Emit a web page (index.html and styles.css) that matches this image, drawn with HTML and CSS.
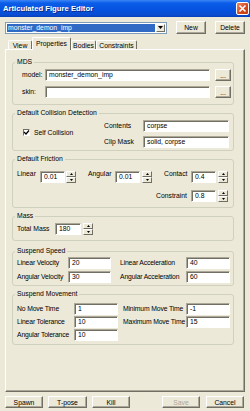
FILE: index.html
```html
<!DOCTYPE html>
<html>
<head>
<meta charset="utf-8">
<title>Articulated Figure Editor</title>
<link rel="stylesheet" href="styles.css">
</head>
<body>
<div class="window">
  <div class="titlebar">
    <span class="title">Articulated Figure Editor</span>
    <span class="close"><svg width="9" height="9" viewBox="0 0 9 9"><path d="M1.5 1.5L7.5 7.5M7.5 1.5L1.5 7.5" stroke="#fff" stroke-width="1.6" fill="none"/></svg></span>
  </div>

  <div class="toolbar">
    <div class="combo">
      <span class="combo-value">monster_demon_imp</span>
      <span class="combo-btn"><svg width="5" height="3" viewBox="0 0 5 3"><path d="M0 0H5L2.5 3Z" fill="#000"/></svg></span>
    </div>
    <span class="btn btn-top">New</span>
    <span class="btn btn-top">Delete</span>
  </div>

  <div class="tabs">
    <span class="tab tab-view">View</span>
    <span class="tab tab-active">Properties</span>
    <span class="tab tab-bodies">Bodies</span>
    <span class="tab tab-constraints">Constraints</span>
  </div>

  <div class="panel">
    <div class="group group-mds">
      <div class="group-title">MDS</div>
      <div class="mds-body">
        <div class="mds-row"><span class="lbl lbl-mds">model:</span><span class="field field-mds">monster_demon_imp</span><span class="btn btn-dots">...</span></div>
        <div class="mds-row"><span class="lbl lbl-mds">skin:</span><span class="field field-mds"></span><span class="btn btn-dots">...</span></div>
      </div>
    </div>

    <div class="group group-collision">
      <div class="group-title">Default Collision Detection</div>
      <div class="collision-body">
        <div class="check">
          <span class="checkbox"><svg width="7" height="7" viewBox="0 0 7 7"><path d="M1 3L3 5L6 1.5" stroke="#000" stroke-width="1.3" fill="none"/></svg></span>
          <span>Self Collision</span>
        </div>
        <div class="collision-grid">
          <span class="lbl">Contents</span><span class="field">corpse</span>
          <span class="lbl">Clip Mask</span><span class="field">solid, corpse</span>
        </div>
      </div>
    </div>

    <div class="group group-friction">
      <div class="group-title">Default Friction</div>
      <div class="friction-body">
        <div class="friction-row row-first">
          <span class="lbl lbl-linear">Linear</span><span class="field field-num">0.01</span>
          <span class="spin spin-near"><span class="spin-btn"><svg width="3" height="2" viewBox="0 0 3 2"><path d="M0 2H3L1.5 0Z" fill="#000"/></svg></span><span class="spin-btn"><svg width="3" height="2" viewBox="0 0 3 2"><path d="M0 0H3L1.5 2Z" fill="#000"/></svg></span></span>
          <span class="lbl lbl-angular">Angular</span><span class="field field-num">0.01</span>
          <span class="spin"><span class="spin-btn"><svg width="3" height="2" viewBox="0 0 3 2"><path d="M0 2H3L1.5 0Z" fill="#000"/></svg></span><span class="spin-btn"><svg width="3" height="2" viewBox="0 0 3 2"><path d="M0 0H3L1.5 2Z" fill="#000"/></svg></span></span>
          <span class="lbl lbl-right">Contact</span><span class="field field-num">0.4</span>
          <span class="spin"><span class="spin-btn"><svg width="3" height="2" viewBox="0 0 3 2"><path d="M0 2H3L1.5 0Z" fill="#000"/></svg></span><span class="spin-btn"><svg width="3" height="2" viewBox="0 0 3 2"><path d="M0 0H3L1.5 2Z" fill="#000"/></svg></span></span>
        </div>
        <div class="friction-row row-second">
          <span class="lbl lbl-right">Constraint</span><span class="field field-num">0.8</span>
          <span class="spin"><span class="spin-btn"><svg width="3" height="2" viewBox="0 0 3 2"><path d="M0 2H3L1.5 0Z" fill="#000"/></svg></span><span class="spin-btn"><svg width="3" height="2" viewBox="0 0 3 2"><path d="M0 0H3L1.5 2Z" fill="#000"/></svg></span></span>
        </div>
      </div>
    </div>

    <div class="group group-mass">
      <div class="group-title">Mass</div>
      <div class="mass-row">
        <span class="lbl lbl-mass">Total Mass</span><span class="field field-mass">180</span>
        <span class="spin"><span class="spin-btn"><svg width="3" height="2" viewBox="0 0 3 2"><path d="M0 2H3L1.5 0Z" fill="#000"/></svg></span><span class="spin-btn"><svg width="3" height="2" viewBox="0 0 3 2"><path d="M0 0H3L1.5 2Z" fill="#000"/></svg></span></span>
      </div>
    </div>

    <div class="group group-speed">
      <div class="group-title">Suspend Speed</div>
      <div class="speed-grid">
        <span class="lbl">Linear Velocity</span><span class="field">20</span>
        <span class="lbl">Linear Acceleration</span><span class="field">40</span>
        <span class="lbl">Angular Velocity</span><span class="field">30</span>
        <span class="lbl">Angular Acceleration</span><span class="field">60</span>
      </div>
    </div>

    <div class="group group-movement">
      <div class="group-title">Suspend Movement</div>
      <div class="movement-grid">
        <span class="lbl">No Move Time</span><span class="field">1</span>
        <span class="lbl">Minimum Move Time</span><span class="field">-1</span>
        <span class="lbl">Linear Tolerance</span><span class="field">10</span>
        <span class="lbl">Maximum Move Time</span><span class="field">15</span>
        <span class="lbl">Angular Tolerance</span><span class="field">10</span>
      </div>
    </div>
  </div>

  <div class="footer">
    <span class="btn btn-spawn">Spawn</span>
    <span class="btn btn-tpose">T-pose</span>
    <span class="btn btn-kill">Kill</span>
    <span class="btn btn-save disabled">Save</span>
    <span class="btn btn-cancel">Cancel</span>
  </div>
</div>
</body>
</html>
```

FILE: styles.css
```css
* { box-sizing: border-box; }
html, body { margin: 0; padding: 0; }
body {
  width: 250px;
  height: 411px;
  overflow: hidden;
  background: #ECE9D8;
  font-family: "Liberation Sans", Arial, sans-serif;
  font-size: 6.8px;
  color: #000;
}
.window { display: flex; flex-direction: column; height: 411px; }

/* title bar */
.titlebar {
  flex: none;
  height: 17px;
  display: flex;
  align-items: center;
  justify-content: space-between;
  padding: 0 1px 1px 3px;
  background: linear-gradient(#3C86F5 0%, #0B5DE8 18%, #0553E0 55%, #0A4ED3 85%, #0840B8 100%);
}
.title {
  color: #fff;
  font-weight: bold;
  font-size: 7.7px;
  text-shadow: 1px 1px 0 #0A2A8A;
}
.close {
  width: 13px;
  height: 13px;
  border: 1px solid #fff;
  border-radius: 2px;
  background: linear-gradient(135deg, #EC8A66, #D5451A 60%, #C23A12);
  display: flex;
  align-items: center;
  justify-content: center;
}

/* toolbar */
.toolbar {
  flex: none;
  height: 13px;
  margin-top: 4px;
  padding: 0 5px;
  display: flex;
  align-items: center;
}
.combo {
  width: 162px;
  height: 12px;
  border: 1px solid #7F9DB9;
  background: #fff;
  display: flex;
  padding: 1px;
}
.combo-value {
  flex: 1;
  background: #316AC5;
  color: #fff;
  line-height: 8px;
  padding-left: 1px;
  margin-right: 1px;
}
.combo-btn {
  width: 9px;
  border: 1px solid;
  border-color: #fff #716F64 #716F64 #fff;
  background: #ECE9D8;
  display: flex;
  align-items: center;
  justify-content: center;
}

.btn {
  display: flex;
  align-items: center;
  justify-content: center;
  border: 1px solid;
  border-color: #fff #716F64 #716F64 #fff;
  box-shadow: inset -1px -1px 0 #ACA899;
  background: #ECE9D8;
  white-space: nowrap;
}
.btn-top { width: 30px; height: 13px; margin-left: 9px; }

/* tabs */
.tabs {
  flex: none;
  height: 12px;
  margin: 3px 5px 0 5px;
  padding-left: 3px;
  display: flex;
  align-items: flex-end;
}
.tab {
  height: 9px;
  display: flex;
  align-items: center;
  justify-content: center;
  border: 1px solid;
  border-bottom: none;
  border-color: #fff #716F64 #716F64 #fff;
  border-radius: 2px 2px 0 0;
  background: #ECE9D8;
}
.tab-view { width: 24px; }
.tab-active {
  width: 39px;
  height: 13px;
  margin-bottom: -1px;
  padding-bottom: 2px;
  z-index: 1;
  position: relative;
}
.tab-bodies { width: 25px; }
.tab-constraints { width: 41px; }

/* panel */
.panel {
  flex: none;
  height: 343px;
  margin: 0 5px;
  padding: 12px 10px 0 6px;
  border: 1px solid;
  border-color: #fff #716F64 #716F64 #fff;
  box-shadow: inset -1px -1px 0 #ACA899;
  display: flex;
  flex-direction: column;
}

.group {
  flex: none;
  border: 1px solid #D0D0BF;
  border-radius: 3px;
  margin-top: 8px;
}
.group-mds { margin-top: 0; }
.group-speed { margin-top: 10px; }
.group-title {
  margin: -5px 0 0 2px;
  padding: 0 2px;
  height: 8px;
  line-height: 8px;
  width: max-content;
  background: #ECE9D8;
}

.lbl { white-space: nowrap; line-height: 12px; }

.field {
  height: 12px;
  background: #fff;
  border: 1px solid;
  border-color: #ACA899 #fff #fff #ACA899;
  box-shadow: inset 1px 1px 0 #716F64;
  padding-left: 3px;
  line-height: 10px;
  white-space: nowrap;
  overflow: hidden;
}

/* MDS */
.mds-body {
  margin-top: 3px;
  padding: 0 0 6px 9px;
  display: flex;
  flex-direction: column;
  gap: 5px;
}
.mds-row { display: flex; align-items: center; }
.lbl-mds { width: 23px; }
.field-mds { width: 165px; }
.btn-dots { width: 16px; height: 12px; margin-left: 5px; }

/* collision */
.collision-body {
  margin-top: 3px;
  padding-bottom: 2px;
  display: flex;
}
.check {
  width: 91px;
  padding-left: 10px;
  margin-top: 9px;
  align-self: flex-start;
  display: flex;
  align-items: center;
  gap: 4px;
}
.checkbox {
  width: 7px;
  height: 7px;
  background: #fff;
  border: 1px solid;
  border-color: #716F64 #fff #fff #716F64;
  display: flex;
  align-items: center;
  justify-content: center;
}
.checkbox svg { flex: none; }
.collision-grid {
  display: grid;
  grid-template-columns: 39px 86px;
  row-gap: 4px;
  align-items: center;
}

/* friction */
.friction-body {
  margin-top: 5px;
  padding: 0 5px 5px 4px;
  display: flex;
  flex-direction: column;
  gap: 5px;
}
.friction-row { display: flex; align-items: center; }
.row-second { justify-content: flex-end; }
.row-first .lbl { padding-bottom: 5px; }
.lbl-linear { width: 23px; }
.lbl-angular { width: 27px; margin-left: 12px; }
.lbl-right { width: 27px; margin-left: 12px; text-align: right; padding-right: 4px; }
.row-second .lbl-right { width: auto; }
.field-num { width: 25px; }
.spin {
  width: 10px;
  height: 12px;
  margin-left: 2px;
  display: flex;
  flex-direction: column;
}
.spin-near { margin-left: 1px; }
.spin-btn {
  flex: 1;
  border: 1px solid;
  border-color: #fff #716F64 #716F64 #fff;
  background: #ECE9D8;
  display: flex;
  align-items: center;
  justify-content: center;
}

/* mass */
.mass-row {
  margin-top: 3px;
  padding: 0 0 5px 4px;
  display: flex;
  align-items: center;
}
.lbl-mass { width: 38px; }
.field-mass { width: 26px; }

/* speed */
.speed-grid {
  margin-top: 2px;
  padding: 0 0 2px 4px;
  display: grid;
  grid-template-columns: 51px 43px 75px 44px;
  row-gap: 2px;
  align-items: center;
}
.speed-grid > :nth-child(4n+3) { margin-left: 9px; }

/* movement */
.movement-grid {
  margin-top: 5px;
  padding: 0 0 3px 4px;
  display: grid;
  grid-template-columns: 57px 44px 68px 44px;
  row-gap: 1px;
  align-items: center;
}
.movement-grid > :nth-child(4n+3) { margin-left: 5px; }
.speed-grid .lbl, .movement-grid .lbl { letter-spacing: -0.15px; }

/* footer */
.footer {
  flex: none;
  height: 12px;
  margin-top: 4px;
  padding: 0 6px 0 5px;
  display: flex;
}
.footer .btn { height: 12px; width: 38px; }
.footer .btn-tpose { margin-left: 5px; width: 39px; }
.btn-kill { margin-left: 5px; }
.btn-save { margin-left: auto; margin-right: 6px; }
.disabled { color: #ACA899; }
```
